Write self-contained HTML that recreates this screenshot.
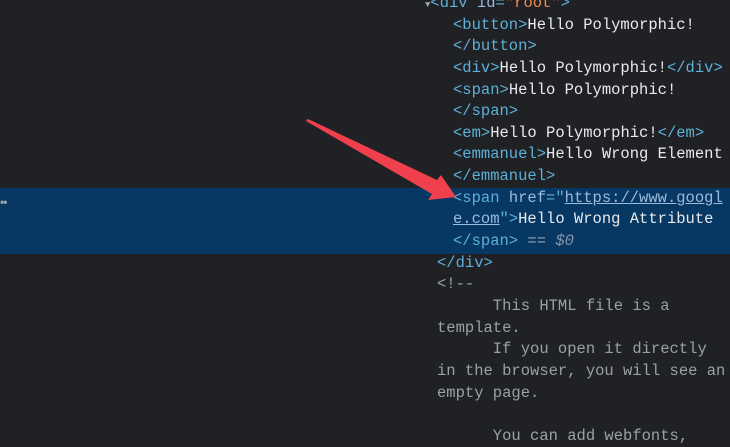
<!DOCTYPE html>
<html><head><style>
html,body{margin:0;padding:0;width:730px;height:441px;overflow:hidden;background:#202124;}
.hl{position:absolute;left:0;top:188px;width:730px;height:66px;background:#073763;}
.code{position:absolute;left:0;top:-7px;font-family:"Liberation Mono",monospace;font-size:15.5px;line-height:21.65px;color:#e8eaed;}
.l{position:relative;height:21.65px;white-space:pre;}
.t{color:#5db0d7}.a{color:#9bbbdc}.v{color:#f28b54}.u{text-decoration:underline;color:#9bbbdc}
.c{color:#9aa0a6}.i{font-style:italic;color:#8a97a8}
.dots{position:absolute;left:0;top:195px;color:#9aa0a6;font:bold 12px "Liberation Sans",sans-serif;letter-spacing:-1px}
</style></head><body>
<div class="hl"></div>
<div class="dots">••</div>
<div class="code"><div class="l" style="left:425px"><span class="c" style="font-size:9px">▼</span><span class="t">&lt;div </span><span class="a">id</span><span class="t">=</span><span class="v">"root"</span><span class="t">&gt;</span></div><div class="l" style="left:453px"><span class="t">&lt;button&gt;</span>Hello Polymorphic!</div><div class="l" style="left:453px"><span class="t">&lt;/button&gt;</span></div><div class="l" style="left:453px"><span class="t">&lt;div&gt;</span>Hello Polymorphic!<span class="t">&lt;/div&gt;</span></div><div class="l" style="left:453px"><span class="t">&lt;span&gt;</span>Hello Polymorphic!</div><div class="l" style="left:453px"><span class="t">&lt;/span&gt;</span></div><div class="l" style="left:453px"><span class="t">&lt;em&gt;</span>Hello Polymorphic!<span class="t">&lt;/em&gt;</span></div><div class="l" style="left:453px"><span class="t">&lt;emmanuel&gt;</span>Hello Wrong Element</div><div class="l" style="left:453px"><span class="t">&lt;/emmanuel&gt;</span></div><div class="l" style="left:453px"><span class="t">&lt;span </span><span class="a">href</span><span class="t">="</span><span class="u">https://www.googl</span></div><div class="l" style="left:453px"><span class="u">e.com</span><span class="t">"&gt;</span>Hello Wrong Attribute</div><div class="l" style="left:453px"><span class="t">&lt;/span&gt;</span><span class="c"> == </span><span class="i">$0</span></div><div class="l" style="left:437px"><span class="t">&lt;/div&gt;</span></div><div class="l c" style="left:437px">&lt;!--</div><div class="l c" style="left:437px">      This HTML file is a</div><div class="l c" style="left:437px">template.</div><div class="l c" style="left:437px">      If you open it directly</div><div class="l c" style="left:437px">in the browser, you will see an</div><div class="l c" style="left:437px">empty page.</div><div class="l c" style="left:437px"> </div><div class="l c" style="left:437px">      You can add webfonts,</div></div>
<svg style="position:absolute;left:0;top:0" width="730" height="441">
<polygon points="306,121 308,119 437,180 441,175 456,197 428,200 432,194" fill="#f0404e"/>
</svg>
</body></html>
